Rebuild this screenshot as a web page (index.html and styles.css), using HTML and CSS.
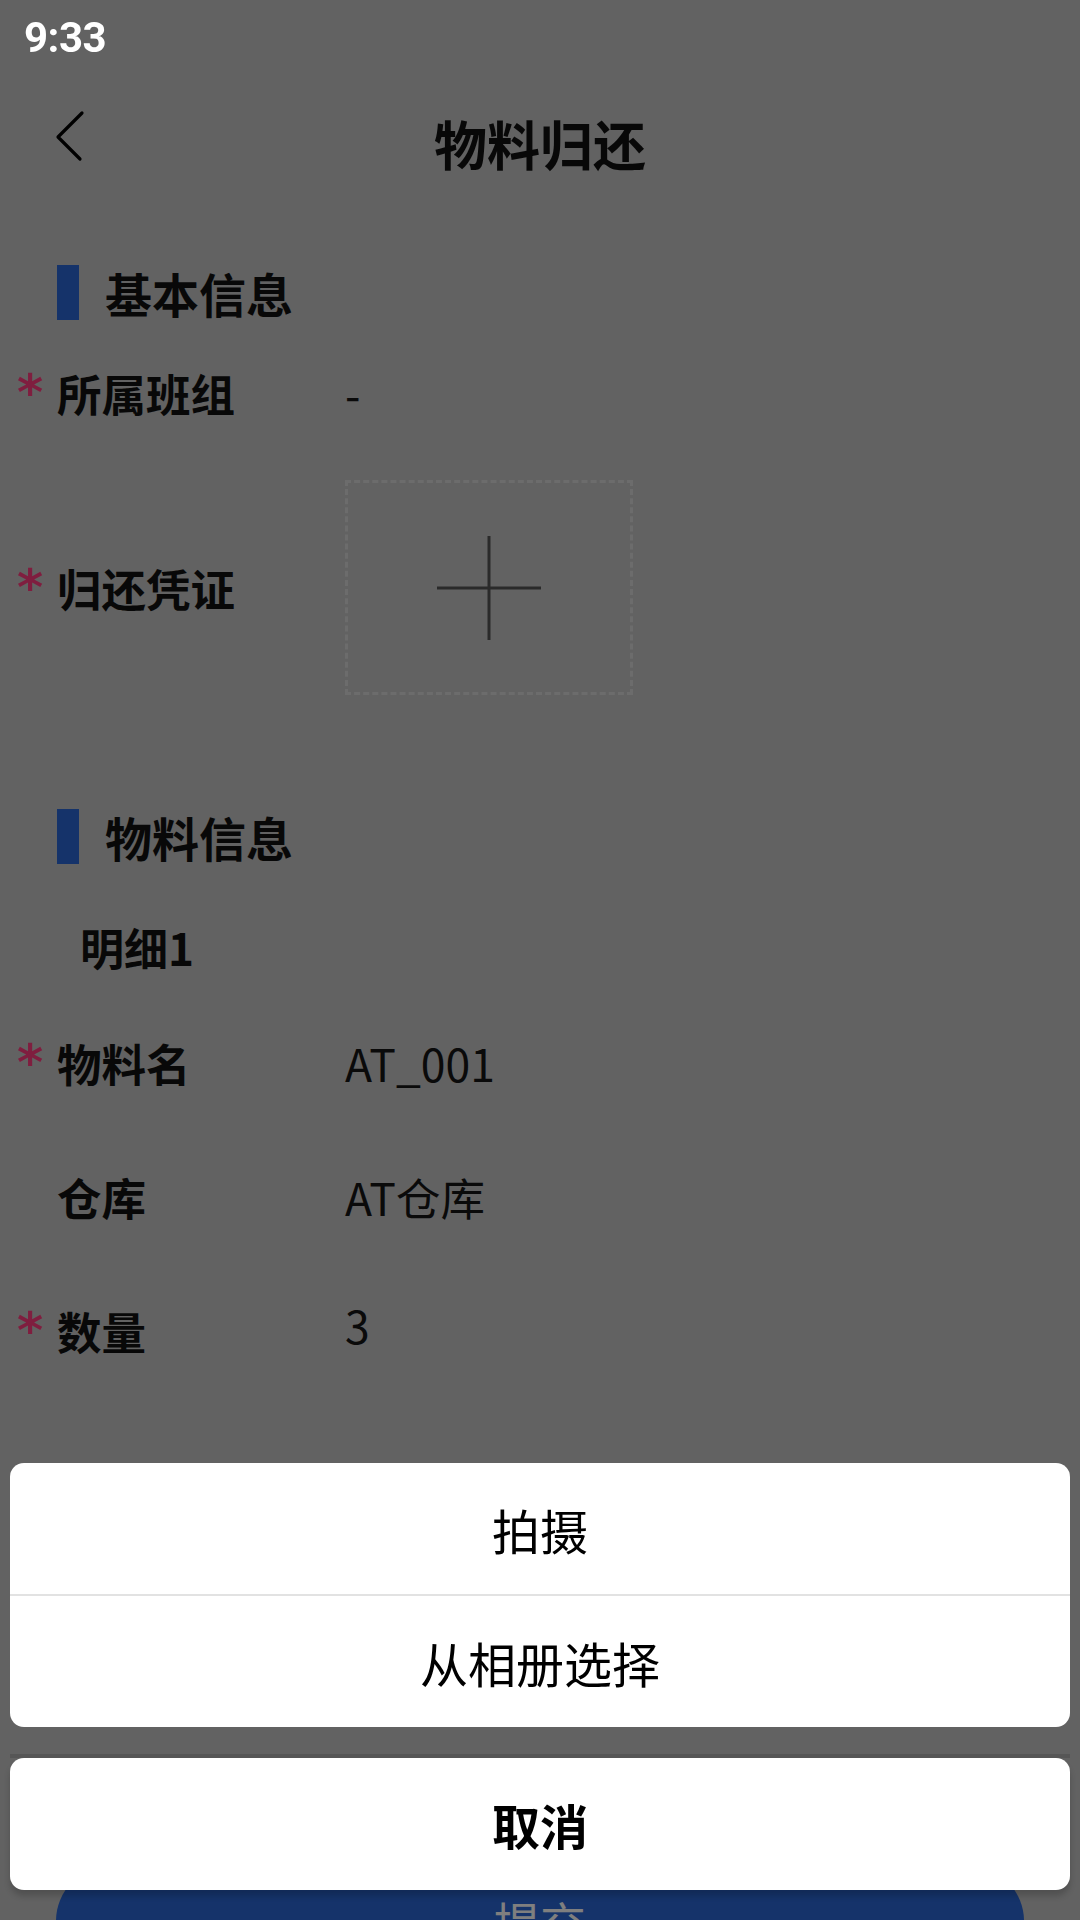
FILE: index.html
```html
<!DOCTYPE html>
<html lang="zh-CN">
<head>
<meta charset="utf-8">
<title>物料归还</title>
<link rel="stylesheet" href="styles.css">
</head>
<body>
<div class="page">
  <div class="statusbar"><span class="time">9:33</span></div>
  <header class="navbar">
    <div class="nav-left">
      <svg class="back" width="36" height="52" viewBox="0 0 36 52"><polyline points="30,3 6,27 28,49" fill="none" stroke="#000" stroke-width="3.2" stroke-linecap="round" stroke-linejoin="round"/></svg>
    </div>
    <h1 class="nav-title">物料归还</h1>
    <div class="nav-right"></div>
  </header>

  <section class="section">
    <div class="section-title"><span class="bar"></span><span class="section-text">基本信息</span></div>
    <div class="row row-team"><span class="req">*</span><span class="label">所属班组</span><span class="value">-</span></div>
    <div class="row row-upload"><span class="req">*</span><span class="label">归还凭证</span>
      <div class="uploader">
        <svg width="106" height="106" viewBox="0 0 106 106"><line x1="1" y1="53" x2="105" y2="53" stroke="#555" stroke-width="3"/><line x1="53" y1="1" x2="53" y2="105" stroke="#555" stroke-width="3"/></svg>
      </div>
    </div>
  </section>

  <section class="section">
    <div class="section-title section-title-2"><span class="bar"></span><span class="section-text">物料信息</span></div>
    <div class="detail-title">明细1</div>
    <div class="row row-field"><span class="req">*</span><span class="label">物料名</span><span class="value">AT_001</span></div>
    <div class="row row-field"><span class="req"></span><span class="label">仓库</span><span class="value">AT仓库</span></div>
    <div class="row row-field"><span class="req">*</span><span class="label">数量</span><span class="value value-raised">3</span></div>
  </section>

  <footer class="footer"><button class="submit">提交</button></footer>
</div>

<div class="mask"></div>

<div class="action-sheet">
  <div class="sheet-group">
    <div class="sheet-item">拍摄</div>
    <div class="sheet-divider"></div>
    <div class="sheet-item">从相册选择</div>
  </div>
  <div class="sheet-sep"></div>
  <div class="sheet-group sheet-cancel">
    <div class="sheet-item sheet-item-bold">取消</div>
  </div>
</div>
</body>
</html>
```

FILE: styles.css
```css
* { box-sizing: border-box; }

html, body {
  margin: 0;
  padding: 0;
  width: 1080px;
  height: 1920px;
  overflow: hidden;
}

body {
  background: #c4c4c4;
  font-family: "Noto Sans CJK SC", "Noto Sans", sans-serif;
  color: #1a1a1a;
}

.page {
  display: flex;
  flex-direction: column;
  height: 1920px;
  overflow: hidden;
}

.statusbar {
  position: relative;
  z-index: 30;
  height: 75px;
  display: flex;
  align-items: center;
  padding-left: 24px;
}

.time {
  font-family: Roboto, "Liberation Sans", sans-serif;
  font-weight: 700;
  font-size: 42px;
  color: #fff;
  letter-spacing: -0.5px;
}

.navbar {
  height: 135px;
  display: grid;
  grid-template-columns: 1fr auto 1fr;
  align-items: center;
}

.nav-left {
  align-self: start;
  padding: 35px 0 0 52px;
  display: flex;
}

.nav-title {
  margin: 0;
  font-size: 53px;
  font-weight: 700;
  color: #111;
  line-height: 60px;
}

.section-title {
  display: flex;
  align-items: center;
  gap: 26px;
  padding: 55px 0 0 57px;
}

.section-title-2 { padding-top: 114px; }

.bar {
  width: 22px;
  height: 55px;
  background: #2a66d4;
  flex: none;
}

.section-text {
  font-size: 47px;
  font-weight: 700;
  line-height: 55px;
  color: #111;
}

.row {
  display: flex;
  align-items: center;
  padding-left: 17px;
}

.req {
  width: 40px;
  flex: none;
  color: #ff3d7f;
  font-family: "DejaVu Sans", sans-serif;
  font-size: 50px;
  font-weight: 700;
  line-height: 44px;
  height: 44px;
}

.label {
  width: 288px;
  flex: none;
  font-size: 44.5px;
  font-weight: 700;
  line-height: 44px;
  color: #111;
}

.value {
  font-size: 44.5px;
  font-weight: 400;
  line-height: 44px;
  color: #151515;
}

.value-raised { margin-bottom: 12px; }

.row-team { height: 146px; }

.row-upload { padding-top: 14px; }

.uploader {
  width: 288px;
  height: 215px;
  border: 3px dashed #d8d8d8;
  display: flex;
  align-items: center;
  justify-content: center;
}

.detail-title {
  padding: 61px 0 27px 80px;
  font-size: 44px;
  font-weight: 700;
  line-height: 44px;
  color: #111;
}

.row-field { height: 134px; }

.footer {
  margin-top: auto;
  margin-bottom: -56px;
  padding: 0 56px;
}

.submit {
  width: 100%;
  height: 110px;
  border: none;
  border-radius: 55px;
  background: #2a66d4;
  color: #fff;
  font-family: "Noto Sans CJK SC", sans-serif;
  font-size: 46px;
}

.mask {
  position: fixed;
  inset: 0;
  background: rgba(0, 0, 0, 0.5);
  z-index: 10;
}

.action-sheet {
  position: fixed;
  left: 10px;
  right: 10px;
  bottom: 30px;
  z-index: 20;
  display: flex;
  flex-direction: column;
}

.sheet-group {
  background: #fff;
  border-radius: 14px;
  overflow: hidden;
}

.sheet-item {
  height: 131px;
  display: flex;
  align-items: center;
  justify-content: center;
  font-size: 48px;
  color: #000;
}

.sheet-item-bold { font-weight: 700; height: 132px; }

.sheet-divider {
  height: 2px;
  background: #e2e2e2;
}

.sheet-sep {
  height: 31px;
  border-bottom: 4px solid rgba(0, 0, 0, 0.12);
}

.sheet-cancel {
  box-shadow: 0 6px 6px rgba(0, 0, 0, 0.18);
}
```
